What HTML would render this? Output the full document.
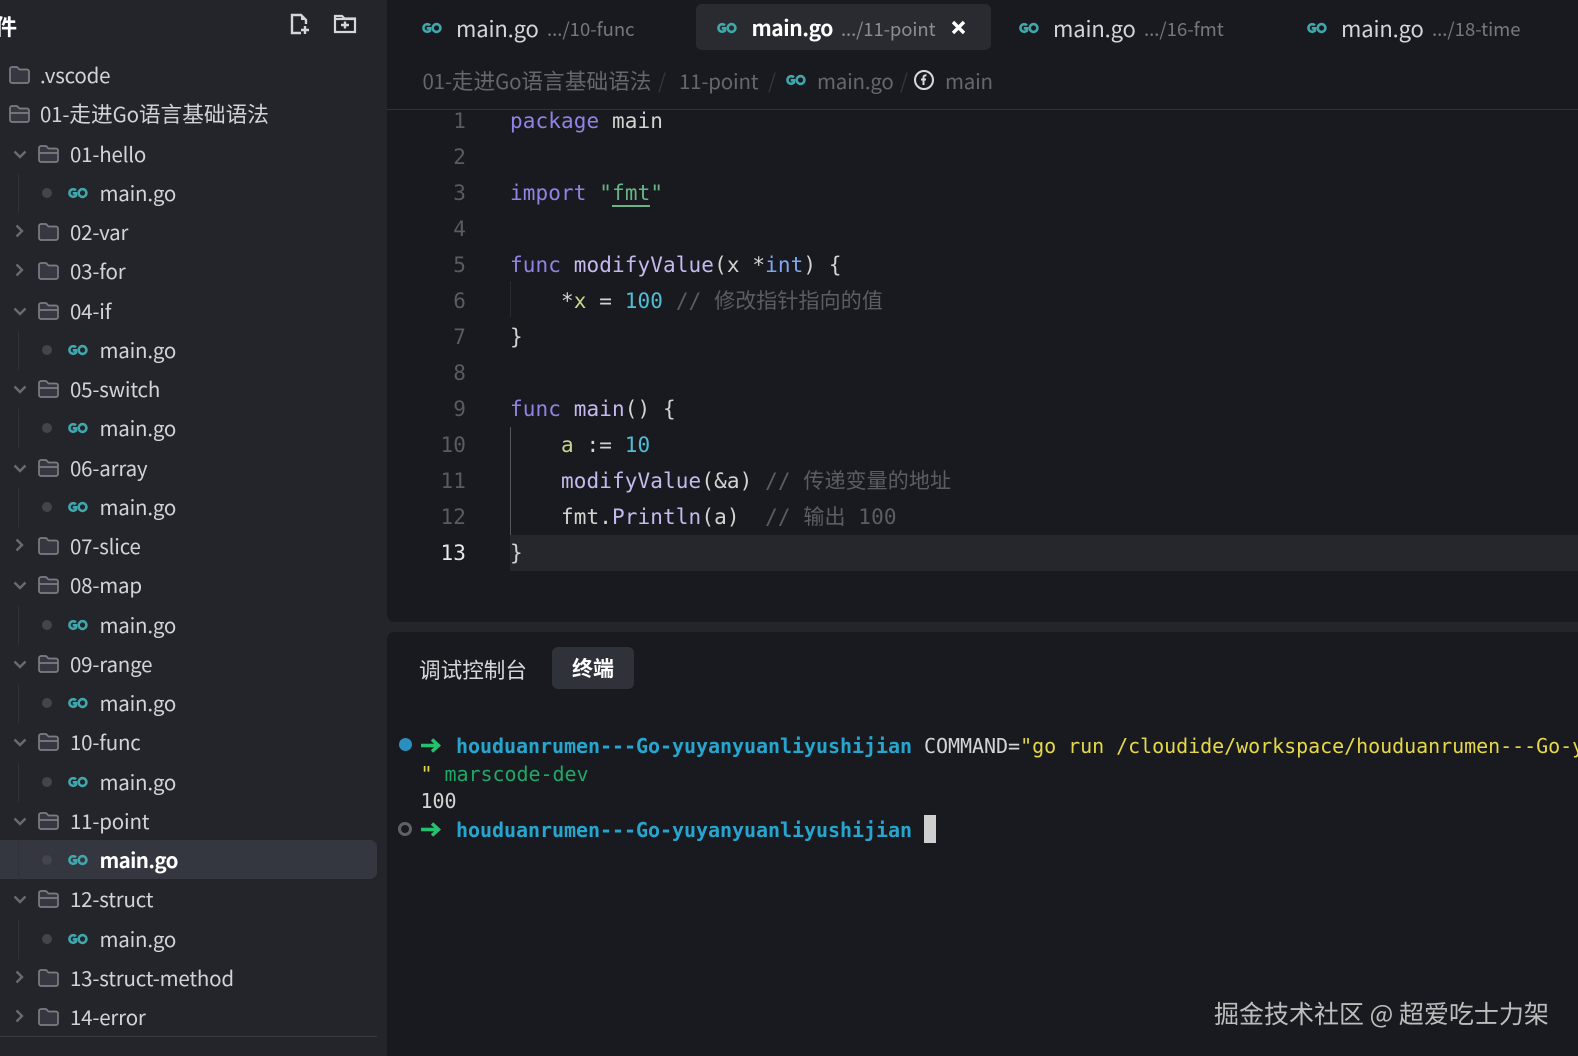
<!DOCTYPE html>
<html><head><meta charset="utf-8">
<style>
*{box-sizing:border-box}
html,body{margin:0;padding:0}
body{width:1578px;height:1056px;overflow:hidden;position:relative;background:#24252b;font-family:"Noto Sans CJK SC","Liberation Sans",sans-serif;color:#d0d1d6}
.ab{position:absolute}
svg{position:absolute;display:block;overflow:visible}
svg[width="20"][height="11"]{width:21px;height:12px;margin-left:-1px}
.r{position:absolute;left:0;width:387px;height:39px}
.t{position:absolute;top:-1px;height:39px;line-height:38px;font-size:20.500px;letter-spacing:-.2px;white-space:nowrap;color:#d2d3d8}
.d0{left:40px}.d1{left:70px}.d2{left:99.500px}
.cj{font-size:21.700px;letter-spacing:0}
.dot{position:absolute;left:42px;top:14px;width:10px;height:10px;border-radius:50%;background:#44454c}
.gd{position:absolute;left:18px;top:0;width:1px;height:39px;background:#303138}
.fo{fill:#363740;stroke:#7c7d83;stroke-width:1.7}
.ch{fill:none;stroke:#696a70;stroke-width:2.4}
.go{fill:none;stroke:#3fa8ac;stroke-width:2.5}
#ed{position:absolute;left:387px;top:0;width:1191px;height:622px;background:#191a1f;border-bottom-left-radius:7px}
#tm{position:absolute;left:387px;top:632px;width:1191px;height:424px;background:#191a1f;border-top-left-radius:7px}
.tt{position:absolute;top:7px;height:42px;line-height:42px;font-size:22px;letter-spacing:-.15px;white-space:nowrap;color:#d4d5da}
.ts{position:absolute;top:8px;height:42px;line-height:42px;font-size:18.500px;white-space:nowrap;color:#77787d}
.bc{position:absolute;top:59px;height:42px;line-height:42px;font-size:20.500px;letter-spacing:-.2px;white-space:nowrap;color:#66676c}
.sl{color:#35363c}
.ln{position:absolute;left:420px;width:46px;text-align:right;height:36px;line-height:36px;font:21px/36px "DejaVu Sans Mono","Noto Sans CJK SC",monospace;color:#5a5b61;letter-spacing:.1px}
.c{position:absolute;left:510px;height:36px;white-space:pre;font:21px/36px "DejaVu Sans Mono","Noto Sans CJK SC",monospace;letter-spacing:.11px;color:#d3d4d0}
.k{color:#8e84e6}.f{color:#c5b9ee}.n{color:#4fbdd4}.m{color:#5c5d63}.v{color:#ccd58c}.y{color:#7fa6f2}.s{color:#67b584}
.x{position:absolute;white-space:pre;font:20px/28px "DejaVu Sans Mono","Noto Sans CJK SC",monospace;color:#d4d4d4;letter-spacing:-.04px}
.b{color:#26a6cf;font-weight:bold}.w{color:#e5d84a}.e{color:#1fa866}
</style></head><body>

<div class="ab" style="left:-4px;top:6px;font-size:22px;font-weight:700;line-height:40px;color:#fff;width:22px;overflow:hidden"><span style="margin-left:-1px">件</span></div>
<svg style="left:290px;top:13px" width="20" height="22" viewBox="0 0 20 22"><path d="M11 20H2V2h9l5 5v4" fill="none" stroke="#d5d6da" stroke-width="2.400"/><path d="M11 2v5h5" fill="#d5d6da"/><path d="M11 17h8M15 13v8" stroke="#d5d6da" stroke-width="2.400"/></svg>
<svg style="left:334px;top:14px" width="22" height="20" viewBox="0 0 22 20"><path d="M1 2h7l2.500 2.500H21V18H1z" fill="#1d1e24" stroke="#d5d6da" stroke-width="2.200"/><path d="M1 5h20" stroke="#d5d6da" stroke-width="2.200"/><path d="M7 11h8M11 7.500v7" stroke="#d5d6da" stroke-width="2.400"/></svg>

<div class="ab" style="left:0;top:840px;width:377px;height:39px;background:#353740;border-radius:0 7px 7px 0"></div>

<div class="r" style="top:56px"><svg style="left:9px;top:10px" width="21" height="18" viewBox="0 0 21 18"><path class="fo" d="M1 3a2 2 0 0 1 2-2h5l2.500 2.500H18a2 2 0 0 1 2 2V15a2 2 0 0 1-2 2H3a2 2 0 0 1-2-2z"/></svg><span class="t d0">.vscode</span></div>
<div class="r" style="top:95.25px"><svg style="left:9px;top:10px" width="21" height="18" viewBox="0 0 21 18"><path class="fo" d="M1 3a2 2 0 0 1 2-2h5l2.500 2.500H18a2 2 0 0 1 2 2V15a2 2 0 0 1-2 2H3a2 2 0 0 1-2-2zM1 8h19"/></svg><span class="t d0">01-<span class="cj">走进</span>Go<span class="cj">语言基础语法</span></span></div>

<div class="r" style="top:134.500px"><svg style="left:13px;top:15px" width="14" height="9" viewBox="0 0 14 9"><path class="ch" d="M1.500 1.500l5.500 5.500 5.500-5.500"/></svg><svg style="left:38px;top:10px" width="21" height="18" viewBox="0 0 21 18"><path class="fo" d="M1 3a2 2 0 0 1 2-2h5l2.500 2.500H18a2 2 0 0 1 2 2V15a2 2 0 0 1-2 2H3a2 2 0 0 1-2-2zM1 8h19"/></svg><span class="t d1">01-hello</span></div>
<div class="r" style="top:173.750px"><i class="gd"></i><i class="dot"></i><svg style="left:68px;top:13px" width="20" height="11" viewBox="0 0 20 11"><path class="go" d="M8.500 3A3.600 3.600 0 1 0 8.500 8V5.800H5.500"/><circle class="go" cx="14.800" cy="5.500" r="3.700"/></svg><span class="t d2">main.go</span></div>
<div class="r" style="top:213px"><svg style="left:15px;top:11px" width="9" height="14" viewBox="0 0 9 14"><path class="ch" d="M1.500 1.500L7 7l-5.500 5.500"/></svg><svg style="left:38px;top:10px" width="21" height="18" viewBox="0 0 21 18"><path class="fo" d="M1 3a2 2 0 0 1 2-2h5l2.500 2.500H18a2 2 0 0 1 2 2V15a2 2 0 0 1-2 2H3a2 2 0 0 1-2-2z"/></svg><span class="t d1">02-var</span></div>
<div class="r" style="top:252.250px"><svg style="left:15px;top:11px" width="9" height="14" viewBox="0 0 9 14"><path class="ch" d="M1.500 1.500L7 7l-5.500 5.500"/></svg><svg style="left:38px;top:10px" width="21" height="18" viewBox="0 0 21 18"><path class="fo" d="M1 3a2 2 0 0 1 2-2h5l2.500 2.500H18a2 2 0 0 1 2 2V15a2 2 0 0 1-2 2H3a2 2 0 0 1-2-2z"/></svg><span class="t d1">03-for</span></div>
<div class="r" style="top:291.500px"><svg style="left:13px;top:15px" width="14" height="9" viewBox="0 0 14 9"><path class="ch" d="M1.500 1.500l5.500 5.500 5.500-5.500"/></svg><svg style="left:38px;top:10px" width="21" height="18" viewBox="0 0 21 18"><path class="fo" d="M1 3a2 2 0 0 1 2-2h5l2.500 2.500H18a2 2 0 0 1 2 2V15a2 2 0 0 1-2 2H3a2 2 0 0 1-2-2zM1 8h19"/></svg><span class="t d1">04-if</span></div>
<div class="r" style="top:330.750px"><i class="gd"></i><i class="dot"></i><svg style="left:68px;top:13px" width="20" height="11" viewBox="0 0 20 11"><path class="go" d="M8.500 3A3.600 3.600 0 1 0 8.500 8V5.800H5.500"/><circle class="go" cx="14.800" cy="5.500" r="3.700"/></svg><span class="t d2">main.go</span></div>
<div class="r" style="top:370px"><svg style="left:13px;top:15px" width="14" height="9" viewBox="0 0 14 9"><path class="ch" d="M1.500 1.500l5.500 5.500 5.500-5.500"/></svg><svg style="left:38px;top:10px" width="21" height="18" viewBox="0 0 21 18"><path class="fo" d="M1 3a2 2 0 0 1 2-2h5l2.500 2.500H18a2 2 0 0 1 2 2V15a2 2 0 0 1-2 2H3a2 2 0 0 1-2-2zM1 8h19"/></svg><span class="t d1">05-switch</span></div>
<div class="r" style="top:409.250px"><i class="gd"></i><i class="dot"></i><svg style="left:68px;top:13px" width="20" height="11" viewBox="0 0 20 11"><path class="go" d="M8.500 3A3.600 3.600 0 1 0 8.500 8V5.800H5.500"/><circle class="go" cx="14.800" cy="5.500" r="3.700"/></svg><span class="t d2">main.go</span></div>
<div class="r" style="top:448.500px"><svg style="left:13px;top:15px" width="14" height="9" viewBox="0 0 14 9"><path class="ch" d="M1.500 1.500l5.500 5.500 5.500-5.500"/></svg><svg style="left:38px;top:10px" width="21" height="18" viewBox="0 0 21 18"><path class="fo" d="M1 3a2 2 0 0 1 2-2h5l2.500 2.500H18a2 2 0 0 1 2 2V15a2 2 0 0 1-2 2H3a2 2 0 0 1-2-2zM1 8h19"/></svg><span class="t d1">06-array</span></div>
<div class="r" style="top:487.750px"><i class="gd"></i><i class="dot"></i><svg style="left:68px;top:13px" width="20" height="11" viewBox="0 0 20 11"><path class="go" d="M8.500 3A3.600 3.600 0 1 0 8.500 8V5.800H5.500"/><circle class="go" cx="14.800" cy="5.500" r="3.700"/></svg><span class="t d2">main.go</span></div>
<div class="r" style="top:527px"><svg style="left:15px;top:11px" width="9" height="14" viewBox="0 0 9 14"><path class="ch" d="M1.500 1.500L7 7l-5.500 5.500"/></svg><svg style="left:38px;top:10px" width="21" height="18" viewBox="0 0 21 18"><path class="fo" d="M1 3a2 2 0 0 1 2-2h5l2.500 2.500H18a2 2 0 0 1 2 2V15a2 2 0 0 1-2 2H3a2 2 0 0 1-2-2z"/></svg><span class="t d1">07-slice</span></div>
<div class="r" style="top:566.250px"><svg style="left:13px;top:15px" width="14" height="9" viewBox="0 0 14 9"><path class="ch" d="M1.500 1.500l5.500 5.500 5.500-5.500"/></svg><svg style="left:38px;top:10px" width="21" height="18" viewBox="0 0 21 18"><path class="fo" d="M1 3a2 2 0 0 1 2-2h5l2.500 2.500H18a2 2 0 0 1 2 2V15a2 2 0 0 1-2 2H3a2 2 0 0 1-2-2zM1 8h19"/></svg><span class="t d1">08-map</span></div>
<div class="r" style="top:605.500px"><i class="gd"></i><i class="dot"></i><svg style="left:68px;top:13px" width="20" height="11" viewBox="0 0 20 11"><path class="go" d="M8.500 3A3.600 3.600 0 1 0 8.500 8V5.800H5.500"/><circle class="go" cx="14.800" cy="5.500" r="3.700"/></svg><span class="t d2">main.go</span></div>
<div class="r" style="top:644.750px"><svg style="left:13px;top:15px" width="14" height="9" viewBox="0 0 14 9"><path class="ch" d="M1.500 1.500l5.500 5.500 5.500-5.500"/></svg><svg style="left:38px;top:10px" width="21" height="18" viewBox="0 0 21 18"><path class="fo" d="M1 3a2 2 0 0 1 2-2h5l2.500 2.500H18a2 2 0 0 1 2 2V15a2 2 0 0 1-2 2H3a2 2 0 0 1-2-2zM1 8h19"/></svg><span class="t d1">09-range</span></div>
<div class="r" style="top:684px"><i class="gd"></i><i class="dot"></i><svg style="left:68px;top:13px" width="20" height="11" viewBox="0 0 20 11"><path class="go" d="M8.500 3A3.600 3.600 0 1 0 8.500 8V5.800H5.500"/><circle class="go" cx="14.800" cy="5.500" r="3.700"/></svg><span class="t d2">main.go</span></div>
<div class="r" style="top:723.250px"><svg style="left:13px;top:15px" width="14" height="9" viewBox="0 0 14 9"><path class="ch" d="M1.500 1.500l5.500 5.500 5.500-5.500"/></svg><svg style="left:38px;top:10px" width="21" height="18" viewBox="0 0 21 18"><path class="fo" d="M1 3a2 2 0 0 1 2-2h5l2.500 2.500H18a2 2 0 0 1 2 2V15a2 2 0 0 1-2 2H3a2 2 0 0 1-2-2zM1 8h19"/></svg><span class="t d1">10-func</span></div>
<div class="r" style="top:762.500px"><i class="gd"></i><i class="dot"></i><svg style="left:68px;top:13px" width="20" height="11" viewBox="0 0 20 11"><path class="go" d="M8.500 3A3.600 3.600 0 1 0 8.500 8V5.800H5.500"/><circle class="go" cx="14.800" cy="5.500" r="3.700"/></svg><span class="t d2">main.go</span></div>
<div class="r" style="top:801.750px"><svg style="left:13px;top:15px" width="14" height="9" viewBox="0 0 14 9"><path class="ch" d="M1.500 1.500l5.500 5.500 5.500-5.500"/></svg><svg style="left:38px;top:10px" width="21" height="18" viewBox="0 0 21 18"><path class="fo" d="M1 3a2 2 0 0 1 2-2h5l2.500 2.500H18a2 2 0 0 1 2 2V15a2 2 0 0 1-2 2H3a2 2 0 0 1-2-2zM1 8h19"/></svg><span class="t d1">11-point</span></div>
<div class="r" style="top:841px"><i class="gd"></i><i class="dot"></i><svg style="left:68px;top:13px" width="20" height="11" viewBox="0 0 20 11"><path class="go" d="M8.500 3A3.600 3.600 0 1 0 8.500 8V5.800H5.500"/><circle class="go" cx="14.800" cy="5.500" r="3.700"/></svg><span class="t d2" style="font-weight:700;color:#fff;letter-spacing:-.6px">main.go</span></div>
<div class="r" style="top:880.250px"><svg style="left:13px;top:15px" width="14" height="9" viewBox="0 0 14 9"><path class="ch" d="M1.500 1.500l5.500 5.500 5.500-5.500"/></svg><svg style="left:38px;top:10px" width="21" height="18" viewBox="0 0 21 18"><path class="fo" d="M1 3a2 2 0 0 1 2-2h5l2.500 2.500H18a2 2 0 0 1 2 2V15a2 2 0 0 1-2 2H3a2 2 0 0 1-2-2zM1 8h19"/></svg><span class="t d1">12-struct</span></div>
<div class="r" style="top:919.500px"><i class="gd"></i><i class="dot"></i><svg style="left:68px;top:13px" width="20" height="11" viewBox="0 0 20 11"><path class="go" d="M8.500 3A3.600 3.600 0 1 0 8.500 8V5.800H5.500"/><circle class="go" cx="14.800" cy="5.500" r="3.700"/></svg><span class="t d2">main.go</span></div>
<div class="r" style="top:958.750px"><svg style="left:15px;top:11px" width="9" height="14" viewBox="0 0 9 14"><path class="ch" d="M1.500 1.500L7 7l-5.500 5.500"/></svg><svg style="left:38px;top:10px" width="21" height="18" viewBox="0 0 21 18"><path class="fo" d="M1 3a2 2 0 0 1 2-2h5l2.500 2.500H18a2 2 0 0 1 2 2V15a2 2 0 0 1-2 2H3a2 2 0 0 1-2-2z"/></svg><span class="t d1">13-struct-method</span></div>
<div class="r" style="top:998px"><svg style="left:15px;top:11px" width="9" height="14" viewBox="0 0 9 14"><path class="ch" d="M1.500 1.500L7 7l-5.500 5.500"/></svg><svg style="left:38px;top:10px" width="21" height="18" viewBox="0 0 21 18"><path class="fo" d="M1 3a2 2 0 0 1 2-2h5l2.500 2.500H18a2 2 0 0 1 2 2V15a2 2 0 0 1-2 2H3a2 2 0 0 1-2-2z"/></svg><span class="t d1">14-error</span></div>
<div class="ab" style="left:0;top:1036px;width:377px;height:1px;background:#3a3b41"></div>

<div id="ed"></div>
<div class="ab" style="left:387px;top:109px;width:1191px;height:1px;background:#313238"></div>

<div class="ab" style="left:696px;top:4px;width:295px;height:46px;background:#292b31;border-radius:6px"></div>
<svg style="left:422px;top:22px" width="20" height="11" viewBox="0 0 20 11"><path class="go" d="M8.500 3A3.600 3.600 0 1 0 8.500 8V5.800H5.500"/><circle class="go" cx="14.800" cy="5.500" r="3.700"/></svg>
<span class="tt" style="left:456px">main.go</span><span class="ts" style="left:547px">.../10-func</span>
<svg style="left:717px;top:22px" width="20" height="11" viewBox="0 0 20 11"><path class="go" d="M8.500 3A3.600 3.600 0 1 0 8.500 8V5.800H5.500"/><circle class="go" cx="14.800" cy="5.500" r="3.700"/></svg>
<span class="tt" style="left:751.500px;font-weight:700;color:#fff;font-size:21px;letter-spacing:-.45px">main.go</span><span class="ts" style="left:841px;color:#8c8d92;letter-spacing:-.1px">.../11-point</span>
<svg style="left:951px;top:20px" width="15" height="15" viewBox="0 0 15 15"><path d="M2 2l11 11M13 2L2 13" stroke="#fff" stroke-width="3.400"/></svg>
<svg style="left:1019px;top:22px" width="20" height="11" viewBox="0 0 20 11"><path class="go" d="M8.500 3A3.600 3.600 0 1 0 8.500 8V5.800H5.500"/><circle class="go" cx="14.800" cy="5.500" r="3.700"/></svg>
<span class="tt" style="left:1053px">main.go</span><span class="ts" style="left:1144px">.../16-fmt</span>
<svg style="left:1307px;top:22px" width="20" height="11" viewBox="0 0 20 11"><path class="go" d="M8.500 3A3.600 3.600 0 1 0 8.500 8V5.800H5.500"/><circle class="go" cx="14.800" cy="5.500" r="3.700"/></svg>
<span class="tt" style="left:1341px">main.go</span><span class="ts" style="left:1432px">.../18-time</span>

<span class="bc" style="left:422.500px">01-<span class="cj">走进</span>Go<span class="cj">语言基础语法</span></span><span class="bc sl" style="left:658px">/</span>
<span class="bc" style="left:679px">11-point</span><span class="bc sl" style="left:768px">/</span>
<svg style="left:786px;top:74px" width="20" height="11" viewBox="0 0 20 11"><path class="go" d="M8.500 3A3.600 3.600 0 1 0 8.500 8V5.800H5.500"/><circle class="go" cx="14.800" cy="5.500" r="3.700"/></svg>
<span class="bc" style="left:817px">main.go</span><span class="bc sl" style="left:900px">/</span>
<svg style="left:914px;top:70px" width="20" height="20" viewBox="0 0 20 20"><circle cx="10" cy="10" r="9" fill="none" stroke="#d8d9dc" stroke-width="2"/><path d="M12.500 5.500c-2-.6-3 .4-3 2V15M7 9.500h5" fill="none" stroke="#d8d9dc" stroke-width="2"/></svg>
<span class="bc" style="left:945px">main</span>

<div class="ab" style="left:510px;top:535px;width:1068px;height:36px;background:#25272c"></div>
<div class="ab" style="left:510px;top:281px;width:1px;height:36px;background:#2a2b31"></div>
<div class="ab" style="left:510px;top:427px;width:1px;height:108px;background:#55565c"></div>

<div class="ln" style="top:103px">1</div><div class="ln" style="top:139px">2</div><div class="ln" style="top:175px">3</div><div class="ln" style="top:211px">4</div><div class="ln" style="top:247px">5</div><div class="ln" style="top:283px">6</div><div class="ln" style="top:319px">7</div><div class="ln" style="top:355px">8</div><div class="ln" style="top:391px">9</div><div class="ln" style="top:427px">10</div><div class="ln" style="top:463px">11</div><div class="ln" style="top:499px">12</div><div class="ln" style="top:535px;color:#e8e9ec">13</div>

<div class="c" style="top:103px"><span class="k">package</span> main</div>
<div class="c" style="top:175px"><span class="k">import</span> <span class="s">"<span style="border-bottom:2px solid #67b584">fmt</span>"</span></div>
<div class="c" style="top:247px"><span class="k">func</span> <span class="f">modifyValue</span>(x *<span class="y">int</span>) {</div>
<div class="c" style="top:283px">    *<span class="v">x</span> = <span class="n">100</span> <span class="m">// 修改指针指向的值</span></div>
<div class="c" style="top:319px">}</div>
<div class="c" style="top:391px"><span class="k">func</span> <span class="f">main</span>() {</div>
<div class="c" style="top:427px">    <span class="v">a</span> := <span class="n">10</span></div>
<div class="c" style="top:463px">    <span class="f">modifyValue</span>(&amp;a) <span class="m">// 传递变量的地址</span></div>
<div class="c" style="top:499px">    fmt.<span class="f">Println</span>(a)  <span class="m">// 输出 100</span></div>
<div class="c" style="top:535px">}</div>

<div id="tm"></div>
<span class="ab" style="left:419px;top:649px;line-height:42px;font-size:21.600px;color:#d6d7db;white-space:nowrap">调试控制台</span>
<div class="ab" style="left:552px;top:647px;width:82px;height:42px;line-height:42px;background:#30323a;border-radius:6px;text-align:center;font-size:21px;font-weight:700;color:#fff">终端</div>

<i class="ab" style="left:398.500px;top:738px;width:13px;height:13px;border-radius:50%;background:#2a8fbf"></i>
<i class="ab" style="left:398px;top:822px;width:14px;height:14px;border-radius:50%;border:3px solid #606167"></i>
<svg style="left:421px;top:738px" width="20" height="15" viewBox="0 0 20 15"><path d="M0 7.500h17M11 1.500l6.500 6-6.500 6" fill="none" stroke="#25c26e" stroke-width="3.400"/></svg>
<svg style="left:421px;top:822px" width="20" height="15" viewBox="0 0 20 15"><path d="M0 7.500h17M11 1.500l6.500 6-6.500 6" fill="none" stroke="#25c26e" stroke-width="3.400"/></svg>
<div class="x" style="left:456px;top:732px;width:1122px;overflow:hidden"><span class="b">houduanrumen---Go-yuyanyuanliyushijian</span> COMMAND=<span class="w">"go run /cloudide/workspace/houduanrumen---Go-yuyanyuan</span></div>
<div class="x" style="left:420.500px;top:760px"><span class="w">"</span> <span class="e">marscode-dev</span></div>
<div class="x" style="left:420.500px;top:787px">100</div>
<div class="x" style="left:456px;top:816px"><span class="b">houduanrumen---Go-yuyanyuanliyushijian</span></div>
<div class="ab" style="left:924px;top:815px;width:12px;height:28px;background:#cfcfcf"></div>

<div class="ab" style="left:1214px;top:994px;line-height:38px;font-size:25px;color:#bdbdbd;white-space:nowrap">掘金技术社区 @ 超爱吃士力架</div>
</body></html>
